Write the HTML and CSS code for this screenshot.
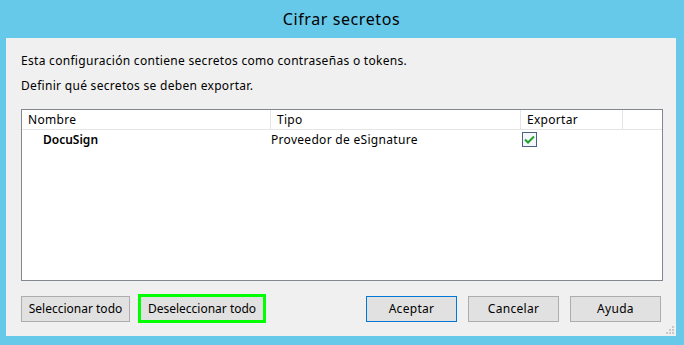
FILE: index.html
```html
<!DOCTYPE html>
<html lang="es">
<head>
    <meta charset="UTF-8">
    <title>Cifrar secretos</title>
    <link rel="stylesheet" href="styles.css">
</head>
<body>
    <div class="window">
        <div class="titlebar">Cifrar secretos</div>
        <div class="dialog">
            <p class="intro">Esta configuración contiene secretos como contraseñas o tokens.</p>
            <p class="intro">Definir qué secretos se deben exportar.</p>

            <div class="list">
                <div class="list-head">
                    <div class="col col-name">Nombre</div>
                    <div class="col col-type">Tipo</div>
                    <div class="col col-export">Exportar</div>
                    <div class="col col-fill"></div>
                </div>
                <div class="list-row">
                    <div class="cell col-name name">DocuSign</div>
                    <div class="cell col-type">Proveedor de eSignature</div>
                    <div class="cell col-export">
                        <span class="checkbox">
                            <svg width="11" height="9" viewBox="0 0 11 9"><path d="M1 4.5 L4 7.5 L10 1.5" fill="none" stroke="#1fa32b" stroke-width="2"/></svg>
                        </span>
                    </div>
                </div>
            </div>

            <div class="buttons">
                <button class="btn">Seleccionar todo</button>
                <button class="btn btn-focus">Deseleccionar todo</button>
                <div class="spacer"></div>
                <button class="btn btn-default">Aceptar</button>
                <button class="btn">Cancelar</button>
                <button class="btn">Ayuda</button>
            </div>
            <div class="grip">
                <svg width="10" height="10" viewBox="0 0 10 10">
                    <rect x="7" y="1" width="2" height="2" fill="#c8c8c8"/>
                    <rect x="4" y="4" width="2" height="2" fill="#c8c8c8"/>
                    <rect x="7" y="4" width="2" height="2" fill="#c8c8c8"/>
                    <rect x="1" y="7" width="2" height="2" fill="#c8c8c8"/>
                    <rect x="4" y="7" width="2" height="2" fill="#c8c8c8"/>
                    <rect x="7" y="7" width="2" height="2" fill="#c8c8c8"/>
                </svg>
            </div>
        </div>
    </div>
</body>
</html>
```

FILE: styles.css
```css
body {
    margin: 0;
    background-color: #66c9ea;
    font-family: "Noto Sans", "Open Sans", sans-serif;
    font-size: 12px;
    letter-spacing: 0.3px;
    color: #000;
}
.window {
    width: 684px;
    height: 345px;
    display: flex;
    flex-direction: column;
}
.titlebar {
    height: 38px;
    line-height: 38px;
    text-align: center;
    font-size: 16px;
    letter-spacing: 0.6px;
    padding-right: 1px;
}
.dialog {
    position: relative;
    margin: 0 8px 0 6px;
    height: 298px;
    box-sizing: border-box;
    background-color: #f0f0f0;
    padding: 10px 13px 0 15px;
}
.intro {
    margin: 0;
    height: 25px;
    line-height: 25px;
}
.list {
    margin-top: 11px;
    height: 172px;
    box-sizing: border-box;
    border: 1px solid #828790;
    background-color: #fff;
}
.list-head {
    display: flex;
    height: 19px;
    border-bottom: 1px solid #e5e5e5;
}
.col {
    box-sizing: border-box;
    padding-left: 6px;
    line-height: 19px;
    border-right: 1px solid #e5e5e5;
}
.col-name { width: 249px; }
.col-type { width: 250px; }
.col-export { width: 102px; }
.col-fill {
    flex: 1;
    border-right: none;
}
.list-row {
    display: flex;
    height: 19px;
}
.cell {
    box-sizing: border-box;
    line-height: 19px;
}
.list-row .col-type { padding-left: 0; }
.list-row .col-export {
    display: flex;
    align-items: center;
    padding-left: 1px;
}
.name {
    padding-left: 21px;
    font-weight: 600;
    letter-spacing: 0;
}
.checkbox {
    width: 13px;
    height: 13px;
    border: 1px solid #4a6287;
    background-color: #f4f7fb;
    display: flex;
    align-items: center;
    justify-content: center;
}
.buttons {
    display: flex;
    align-items: center;
    margin-top: 13px;
    margin-right: 2px;
}
.btn {
    font-family: inherit;
    font-size: 12px;
    letter-spacing: 0.3px;
    height: 26px;
    background-color: #e1e1e1;
    border: 1px solid #adadad;
    padding: 0;
    color: #000;
}
.btn:first-child {
    width: 109px;
    letter-spacing: 0;
}
.btn-focus {
    margin-left: 8px;
    width: 128px;
    height: 29px;
    border: 3px solid #00ff00;
    letter-spacing: 0;
}
.btn-default {
    border-color: #0078d7;
}
.spacer {
    flex: 1;
}
.buttons .btn:nth-child(n+4) {
    width: 91px;
    margin-left: 11px;
}
.buttons .btn:nth-child(4) {
    margin-left: 0;
}
.grip {
    position: absolute;
    right: 1px;
    bottom: 1px;
    line-height: 0;
}
```
